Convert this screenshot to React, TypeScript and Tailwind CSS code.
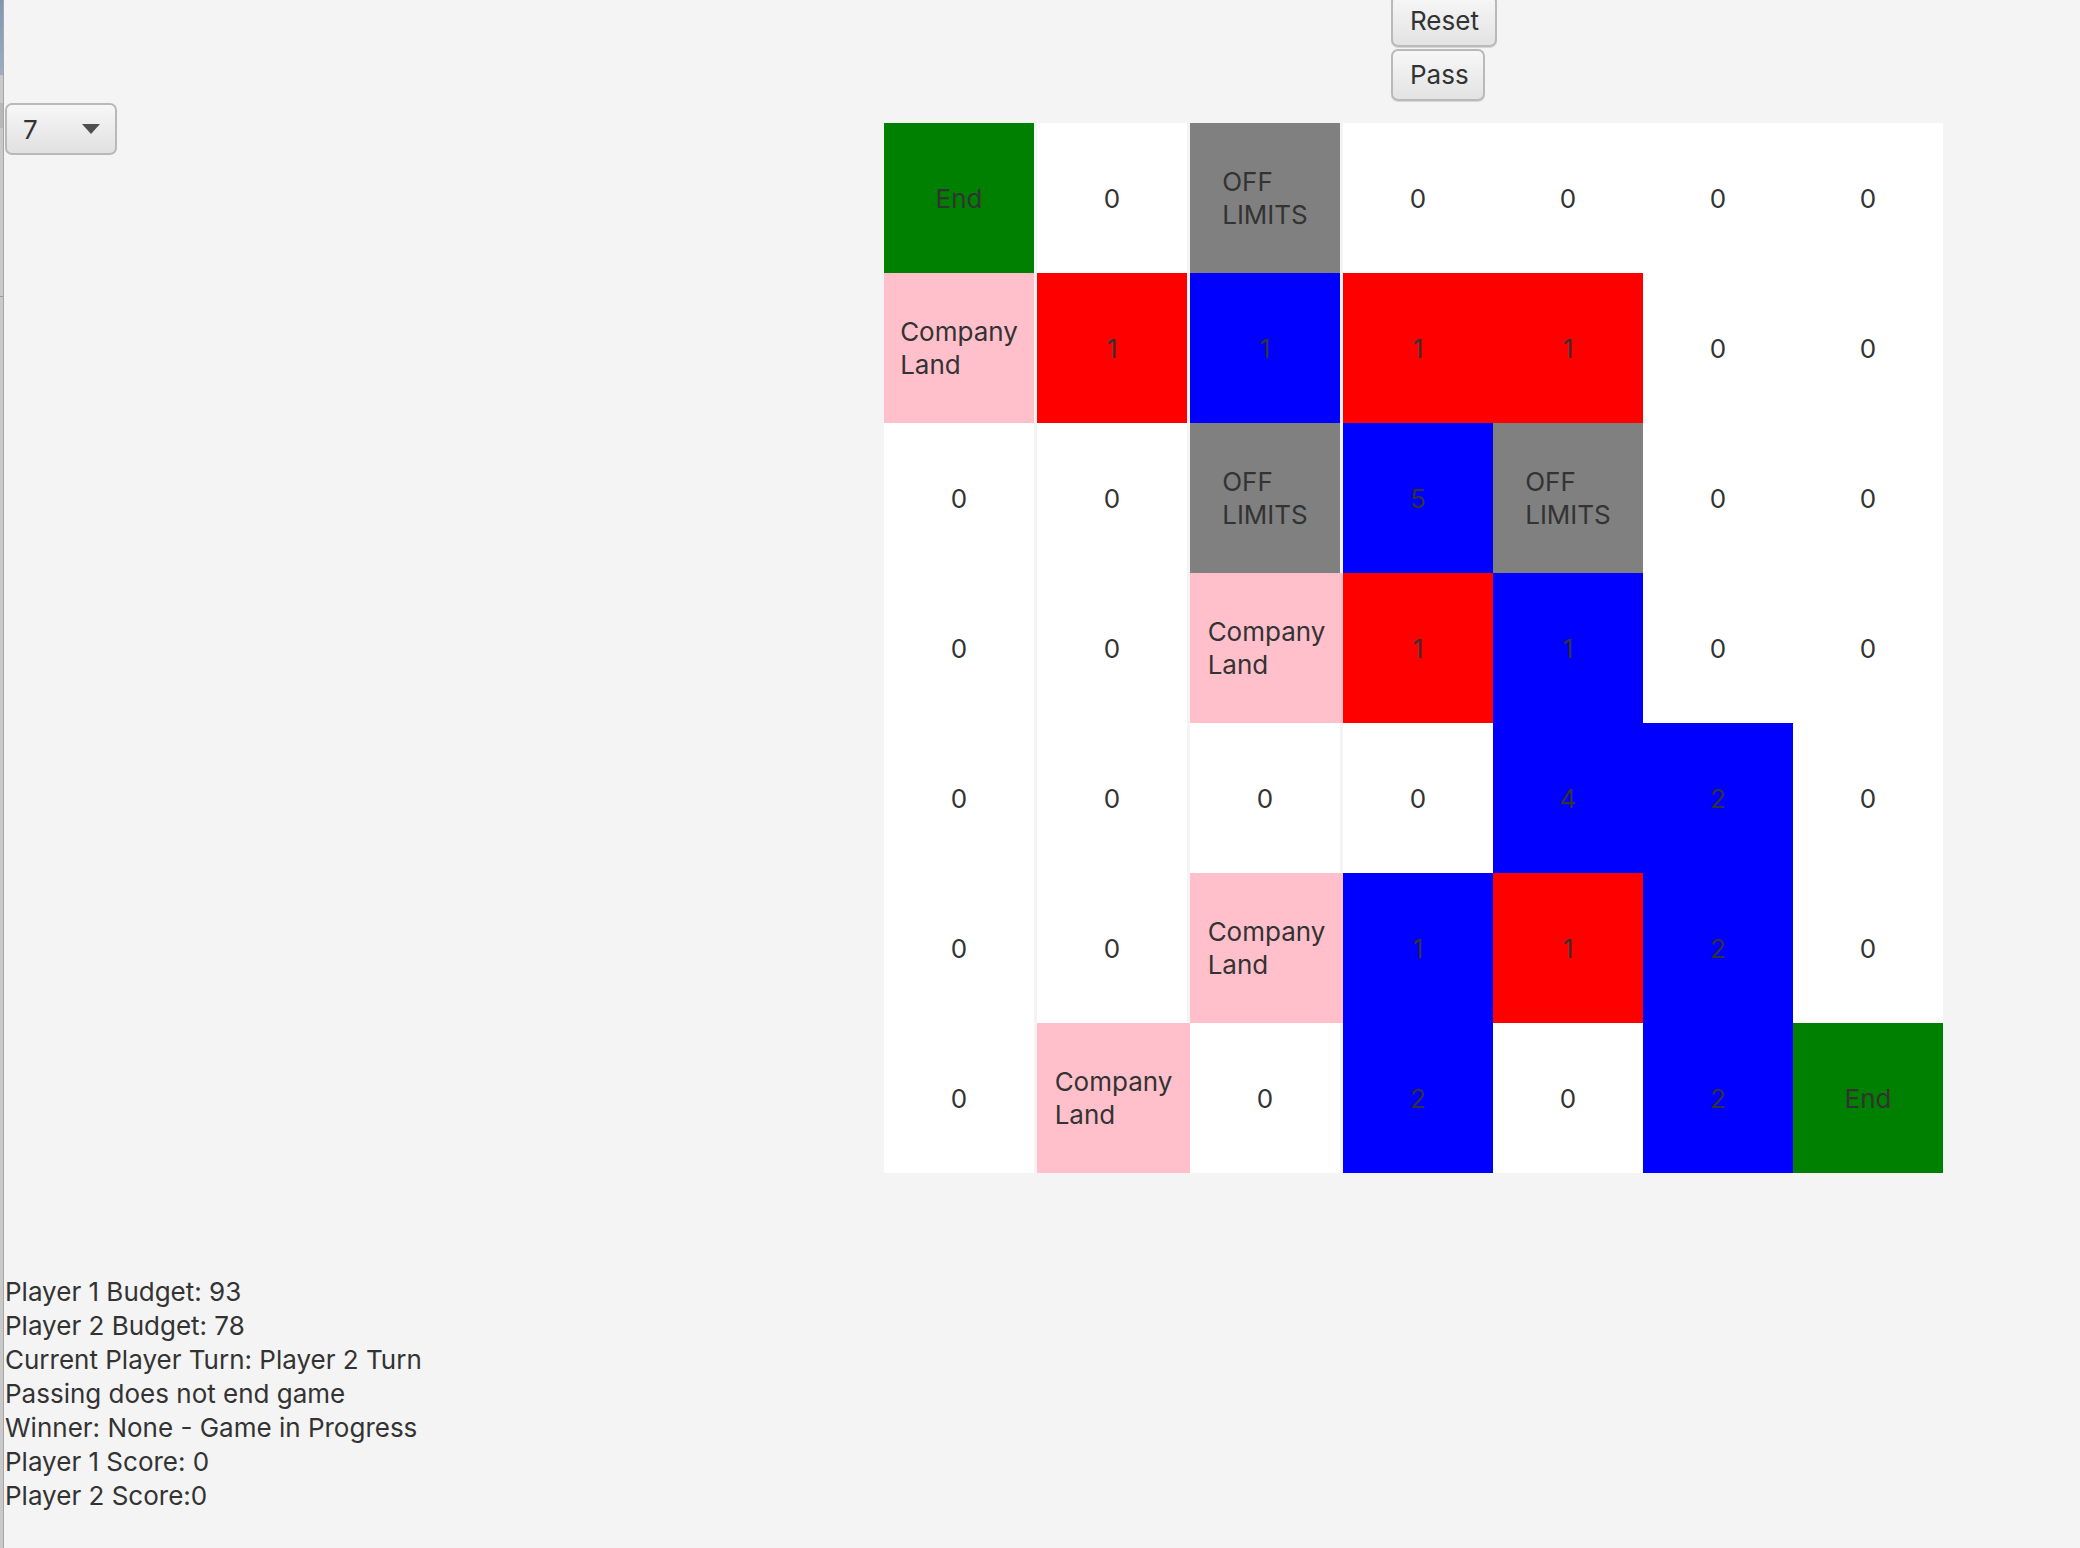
type Kind = 'end' | 'off' | 'land' | 'red' | 'blue' | 'empty';

type Cell = {
  kind: Kind;
  value?: string;
  wide?: boolean;
};

const e = (value = '0'): Cell => ({ kind: 'empty', value });
const r = (value: string): Cell => ({ kind: 'red', value });
const b = (value: string): Cell => ({ kind: 'blue', value });
const off: Cell = { kind: 'off' };
const end: Cell = { kind: 'end' };
const land = (wide = false): Cell => ({ kind: 'land', wide });

const board: Cell[][] = [
  [end, e(), off, e(), e(), e(), e()],
  [land(), r('1'), b('1'), r('1'), r('1'), e(), e()],
  [e(), e(), off, b('5'), off, e(), e()],
  [e(), e(), land(true), r('1'), b('1'), e(), e()],
  [e(), e(), e(), e(), b('4'), b('2'), e()],
  [e(), e(), land(true), b('1'), r('1'), b('2'), e()],
  [e(), land(true), e(), b('2'), e(), b('2'), end],
];

const bgFor: Record<Kind, string> = {
  end: 'bg-[#008000]',
  off: 'bg-[#808080]',
  land: 'bg-[#ffc0cb]',
  red: 'bg-[#ff0000]',
  blue: 'bg-[#0000ff]',
  empty: 'bg-white',
};

const status = [
  'Player 1 Budget: 93',
  'Player 2 Budget: 78',
  'Current Player Turn: Player 2 Turn',
  'Passing does not end game',
  'Winner: None - Game in Progress',
  'Player 1 Score: 0',
  'Player 2 Score:0',
];

function BoardCell({ cell }: { cell: Cell }) {
  let label: React.ReactNode = cell.value;
  if (cell.kind === 'end') label = 'End';
  if (cell.kind === 'off' || cell.kind === 'land') {
    label = (
      <span className="block w-min text-left leading-[33px]">
        {cell.kind === 'off' ? 'OFF LIMITS' : 'Company Land'}
      </span>
    );
  }

  return (
    <div
      className={`${bgFor[cell.kind]} ${
        cell.wide ? 'w-full' : 'w-[150px]'
      } flex h-[150px] items-center justify-center`}
    >
      {label}
    </div>
  );
}

function FxButton({ text, width }: { text: string; width: string }) {
  return (
    <button
      type="button"
      className={`${width} h-[52px] rounded-[7px] border-2 border-[#b9b9b9] bg-gradient-to-b from-[#f7f7f7] to-[#e3e3e3] pl-[17px] text-left leading-[48px] text-[#333] shadow-[0_1px_0_#d8d8d8]`}
    >
      {text}
    </button>
  );
}

export default function App() {
  return (
    <div
      className="flex min-h-[1548px] w-full overflow-hidden bg-[#f4f4f4] text-[26px] text-[#333]"
      style={{ fontFamily: 'Inter, "Open Sans", sans-serif' }}
    >
      {/* sliver of the neighbouring pane on the left */}
      <div className="flex w-[4px] shrink-0 flex-col border-r border-[#a6a6a6] bg-[#c9c9c9]">
        <div className="h-[75px] bg-gradient-to-b from-[#7f95b3] to-[#9aaec6]" />
        <div className="mt-[28px] h-[25px] bg-[#b8b8b8]" />
        <div className="mt-[168px] h-[1px] bg-[#9a9a9a]" />
      </div>

      <div className="flex flex-1 flex-col">
        <div className="-mt-[5px] flex flex-col items-start gap-[2px] pl-[1387px]">
          <FxButton text="Reset" width="w-[106px]" />
          <FxButton text="Pass" width="w-[94px]" />
        </div>

        <div className="mt-[2px] flex items-start">
          <div className="ml-[1px] flex h-[52px] w-[112px] items-center justify-between rounded-[7px] border-2 border-[#b9b9b9] bg-gradient-to-b from-[#f7f7f7] to-[#e1e1e1] pl-[16px] pr-[15px]">
            <span>7</span>
            <svg width="18" height="10" viewBox="0 0 18 10">
              <polygon points="0,0 18,0 9,10" fill="#4f4f4f" />
            </svg>
          </div>

          <div className="ml-[767px] mt-[20px] grid grid-cols-[153px_153px_153px_150px_150px_150px_150px]">
            {board.map((row, y) =>
              row.map((cell, x) => <BoardCell key={`${y}-${x}`} cell={cell} />),
            )}
          </div>
        </div>

        <div className="ml-[1px] mt-[102px] flex flex-col leading-[34px]">
          {status.map((line) => (
            <div key={line}>{line}</div>
          ))}
        </div>
      </div>
    </div>
  );
}
